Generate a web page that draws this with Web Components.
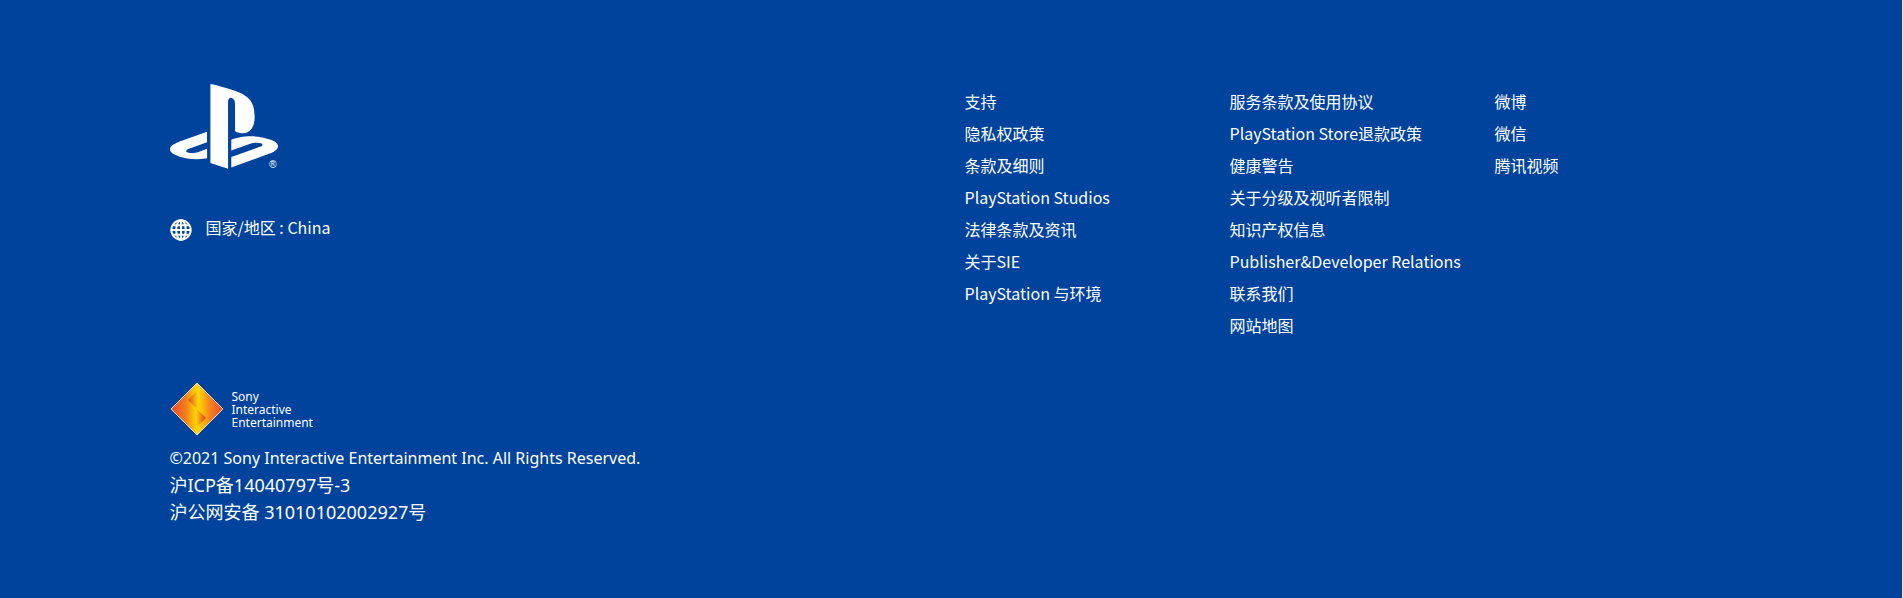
<!DOCTYPE html>
<html lang="zh-CN">
<head>
<meta charset="utf-8">
<meta name="viewport" content="width=device-width, initial-scale=1">
<title>PlayStation</title>
<style>
  body { margin: 0; background: #00439c; color: #fff; font: 16px/32px "Noto Sans CJK SC", sans-serif; }
</style>
</head>
<body>
<site-footer>
  <ps-logo slot="brand"></ps-logo>
  <country-link slot="brand" href="#country">国家/地区 : China</country-link>
  <link-column slot="links">
    <footer-link href="#support">支持</footer-link>
    <footer-link href="#privacy">隐私权政策</footer-link>
    <footer-link href="#terms">条款及细则</footer-link>
    <footer-link href="#studios">PlayStation Studios</footer-link>
    <footer-link href="#legal">法律条款及资讯</footer-link>
    <footer-link href="#sie">关于SIE</footer-link>
    <footer-link href="#environment">PlayStation 与环境</footer-link>
  </link-column>
  <link-column slot="links">
    <footer-link href="#tos">服务条款及使用协议</footer-link>
    <footer-link href="#refund">PlayStation Store退款政策</footer-link>
    <footer-link href="#health">健康警告</footer-link>
    <footer-link href="#ratings">关于分级及视听者限制</footer-link>
    <footer-link href="#ip">知识产权信息</footer-link>
    <footer-link href="#publisher">Publisher&amp;Developer Relations</footer-link>
    <footer-link href="#contact">联系我们</footer-link>
    <footer-link href="#sitemap">网站地图</footer-link>
  </link-column>
  <link-column slot="links">
    <footer-link href="#weibo">微博</footer-link>
    <footer-link href="#weixin">微信</footer-link>
    <footer-link href="#video">腾讯视频</footer-link>
  </link-column>
  <sie-logo slot="legal"></sie-logo>
  <legal-lines slot="legal">
    <span slot="copyright">©2021 Sony Interactive Entertainment Inc. All Rights Reserved.</span>
    <footer-link href="#icp">沪ICP备14040797号-3</footer-link>
    <footer-link href="#police">沪公网安备 31010102002927号</footer-link>
  </legal-lines>
</site-footer>

<script>
const define = (name, html, setup) => {
  const template = document.createElement('template');
  template.innerHTML = html;
  customElements.define(name, class extends HTMLElement {
    constructor() {
      super();
      this.attachShadow({ mode: 'open' }).append(template.content.cloneNode(true));
    }
    connectedCallback() { if (setup) setup(this); }
  });
};
const passHref = el => { el.shadowRoot.querySelector('a').href = el.getAttribute('href'); };

define('site-footer', `
  <style>
    :host { display: block; box-sizing: border-box; min-height: 100vh; padding: 84px 0 64px; box-shadow: inset -1px 0 #dfe8f2, inset -3px 0 #0c3f88; }
    .inner { max-width: 1590px; margin: 0 auto; }
    .top { display: grid; grid-template-columns: repeat(6, 1fr); }
    .brand { grid-column: span 3; padding: 0 13px; }
    .legal { padding: 0 13px; margin-top: 41px; }
    @media (max-width: 1000px) { .top { grid-template-columns: repeat(3, 1fr); } }
  </style>
  <footer class="inner">
    <div class="top">
      <div class="brand"><slot name="brand"></slot></div>
      <slot name="links"></slot>
    </div>
    <div class="legal"><slot name="legal"></slot></div>
  </footer>`);

define('ps-logo', `
  <style>:host { display: block; } svg { display: block; }</style>
  <svg width="110" height="86" viewBox="0 2.596 24.444 19.111" role="img" aria-label="PlayStation">
    <path fill="#fff" d="M8.984 2.596v17.547l3.915 1.261V6.688c0-.69.304-1.151.794-.991.636.18.76.814.76 1.505v5.875c2.441 1.193 4.362-.002 4.362-3.152 0-3.237-1.126-4.675-4.438-5.827-1.307-.448-3.728-1.186-5.39-1.502zm4.656 16.241l6.296-2.275c.715-.258.826-.625.246-.818-.586-.192-1.637-.139-2.357.123l-4.205 1.5V14.98l.24-.085s1.201-.42 2.913-.615c1.696-.18 3.785.03 5.437.661 1.848.601 2.04 1.472 1.576 2.072-.465.6-1.622 1.036-1.622 1.036l-8.544 3.107V18.86zM1.807 18.6c-1.9-.545-2.214-1.668-1.352-2.32.801-.586 2.16-1.052 2.16-1.052l5.615-2.013v2.313L4.205 17c-.705.271-.825.632-.239.826.586.195 1.637.15 2.343-.12L8.247 17v2.074c-.12.03-.256.044-.39.073-1.939.331-3.996.196-6.038-.479z"/>
    <text x="22" y="21.2" font-family="Liberation Sans, sans-serif" font-size="2.3" fill="#fff">®</text>
  </svg>`);

define('country-link', `
  <style>
    :host { display: block; margin-top: 41px; }
    a { display: inline-flex; align-items: center; gap: 14px; color: inherit; text-decoration: none; }
    svg { margin-top: 6px; }
  </style>
  <a><svg width="22" height="22" viewBox="0 0 22 22" fill="none" stroke="#fff" stroke-width="2" aria-hidden="true">
    <circle cx="11" cy="11" r="9.7"/><ellipse cx="11" cy="11" rx="4.8" ry="9.7"/>
    <path d="M11 1v20M1.5 11h19M3 6.2h16M3 15.8h16"/>
  </svg><slot></slot></a>`, passHref);

define('link-column', `
  <style>:host { display: flex; flex-direction: column; padding: 1px 13px 0; min-width: 0; }</style>
  <slot></slot>`);

define('footer-link', `
  <style>
    :host { display: block; white-space: nowrap; }
    a { color: inherit; text-decoration: none; }
    a:hover { text-decoration: underline; }
  </style>
  <a><slot></slot></a>`, passHref);

define('sie-logo', `
  <style>
    :host { display: flex; align-items: center; gap: 8px; }
    p { margin: 0; font: 12px/13px "Noto Sans", sans-serif; }
  </style>
  <svg width="54" height="54" viewBox="0 0 54 54" aria-hidden="true">
    <defs>
      <linearGradient id="base"><stop offset="0" stop-color="#ea4a28"/><stop offset=".28" stop-color="#f57c20"/><stop offset=".48" stop-color="#ffd400"/><stop offset=".54" stop-color="#ffd400"/><stop offset=".75" stop-color="#f58220"/><stop offset="1" stop-color="#ea4a28"/></linearGradient>
      <linearGradient id="upper"><stop offset="0" stop-color="#dc4a1e"/><stop offset="1" stop-color="#fdc010"/></linearGradient>
      <linearGradient id="lower"><stop offset="0" stop-color="#fdc010"/><stop offset="1" stop-color="#dc3c1e"/></linearGradient>
    </defs>
    <path d="M27 1L53 27L27 53L1 27z" fill="url(#base)" stroke="#eedfcf"/>
    <path d="M27 9v18L18 18z" fill="url(#upper)"/>
    <path d="M27 27l9 9l-9 9z" fill="url(#lower)"/>
  </svg>
  <p>Sony<br>Interactive<br>Entertainment</p>`);

define('legal-lines', `
  <style>
    :host { display: block; margin-top: 9px; font-family: "Noto Sans", "Noto Sans CJK SC", sans-serif; font-size: 18px; line-height: 27px; }
    .copyright { font-size: 16px; }
  </style>
  <div class="copyright"><slot name="copyright"></slot></div>
  <slot></slot>`);
</script>
</body>
</html>
